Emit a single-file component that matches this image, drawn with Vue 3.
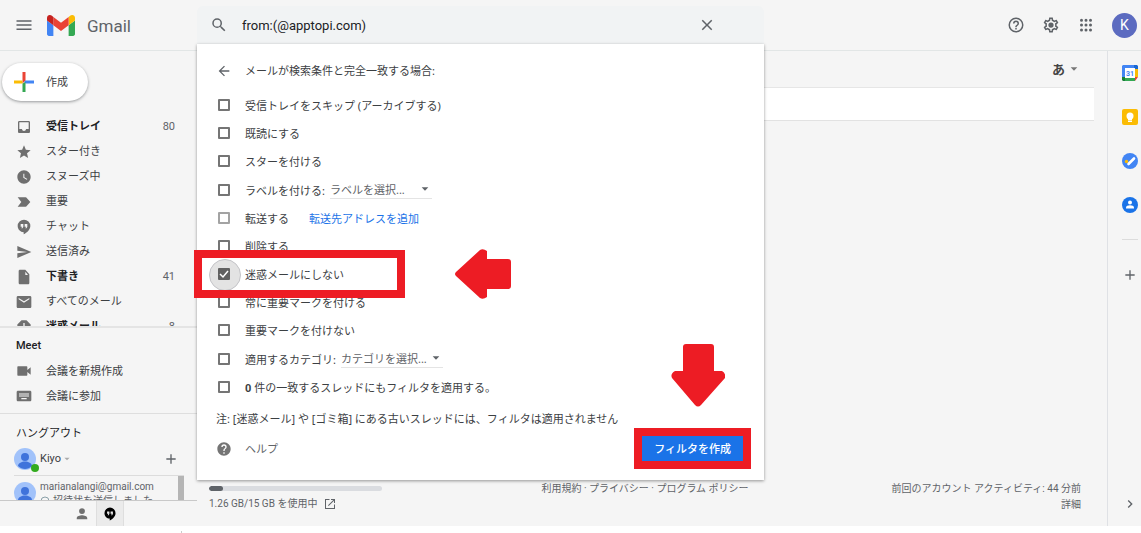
<script setup>
import { ref, h } from 'vue'

const paths = {
  menu: 'M2 18.500h20v-2H2v2zm0-5.500h20v-2H2v2zm0-7.500v2h20v-2H2z',
  search: 'M15.5 14h-.79l-.28-.27A6.47 6.47 0 0 0 16 9.5 6.5 6.5 0 1 0 9.5 16c1.61 0 3.09-.59 4.23-1.57l.27.28v.79l5 4.99L20.49 19l-4.99-5zm-6 0A4.5 4.5 0 1 1 14 9.5 4.5 4.5 0 0 1 9.5 14z',
  close: 'M19 6.41 17.59 5 12 10.59 6.41 5 5 6.41 10.59 12 5 17.59 6.41 19 12 13.41 17.59 19 19 17.59 13.41 12z',
  back: 'M20 11H7.83l5.59-5.59L12 4l-8 8 8 8 1.41-1.41L7.83 13H20v-2z',
  inbox: 'M19 3H5c-1.1 0-2 .9-2 2v14c0 1.1.9 2 2 2h14c1.1 0 2-.9 2-2V5c0-1.1-.9-2-2-2zm0 12h-4c0 1.66-1.35 3-3 3s-3-1.34-3-3H5V5h14v10z',
  star: 'M12 17.27 18.18 21l-1.64-7.03L22 9.24l-7.19-.61L12 2 9.19 8.63 2 9.24l5.46 4.73L5.82 21z',
  clock: 'M12 2C6.5 2 2 6.5 2 12s4.5 10 10 10 10-4.5 10-10S17.5 2 12 2zm4.2 14.2L11 13V7h1.5v5.2l4.5 2.7-.8 1.3z',
  important: 'M2.5 19h12c.67 0 1.27-.33 1.63-.84L21.5 12l-5.37-6.16c-.36-.51-.96-.84-1.63-.84h-12L8 12z',
  hangouts: 'M12 1a9.5 9.5 0 0 0-9.5 9.5c0 5 4 9 9 9.4V23c5-2.4 10-7 10-12.5A9.5 9.5 0 0 0 12 1zM7 7.500h4v4L9.700 14H8l1.200-2.500H7zM13 7.500h4v4L15.700 14H14l1.200-2.500H13z',
  send: 'M2.01 21 23 12 2.01 3 2 10l15 2-15 2z',
  draft: 'M6 1c-1.100 0-2 .9-2 2v18c0 1.100.9 2 2 2h12c1.100 0 2-.9 2-2V8l-6-7H6zm8 8V4l4 5h-4z',
  mail: 'M21 3H3c-1.100 0-2 .9-2 2v14c0 1.100.9 2 2 2h18c1.100 0 2-.9 2-2V5c0-1.100-.9-2-2-2zm-1 5-8 5-8-5V6l8 5 8-5v2z',
  spam: 'M15.730 2H8.270L2 8.270v7.460L8.270 22h7.460L22 15.730V8.270zM12 17.300a1.300 1.300 0 1 1 0-2.600 1.300 1.300 0 0 1 0 2.600zM13 13h-2V6h2z',
  video: 'M17 10.500V6c0-.55-.45-1-1-1H3c-.55 0-1 .45-1 1v12c0 .55.45 1 1 1h13c.55 0 1-.45 1-1v-4.500l5 4v-11z',
  keyboard: 'M21 4H3c-1.100 0-2 .9-2 2v12c0 1.100.9 2 2 2h18c1.100 0 2-.9 2-2V6c0-1.100-.9-2-2-2zM11 8h2v2h-2V8zm0 3h2v2h-2v-2zM8 8h2v2H8V8zm0 3h2v2H8v-2zm-1 2H5v-2h2v2zm0-3H5V8h2v2zm9 7H8v-2h8v2zm0-4h-2v-2h2v2zm0-3h-2V8h2v2zm3 3h-2v-2h2v2zm0-3h-2V8h2v2z',
  help: 'M12 2C6.48 2 2 6.48 2 12s4.48 10 10 10 10-4.48 10-10S17.52 2 12 2zm1 17h-2v-2h2v2zm2.07-7.75-.9.92C13.45 12.9 13 13.500 13 15h-2v-.5c0-1.100.45-2.100 1.170-2.830l1.240-1.260c.37-.36.59-.86.59-1.410a2 2 0 1 0-4 0H8a4 4 0 1 1 8 0c0 .88-.36 1.680-.93 2.250z',
  helpOutline: 'M11 18h2v-2h-2v2zm1-16a10 10 0 1 0 0 20 10 10 0 0 0 0-20zm0 18a8 8 0 1 1 0-16 8 8 0 0 1 0 16zm0-14a4 4 0 0 0-4 4h2a2 2 0 1 1 4 0c0 2-3 1.750-3 5h2c0-2.250 3-2.500 3-5a4 4 0 0 0-4-4z',
  gear: 'M19.43 12.98c.04-.32.07-.64.07-.98 0-.34-.03-.66-.07-.98l2.11-1.65c.19-.15.24-.42.12-.64l-2-3.46c-.09-.16-.26-.25-.44-.25-.06 0-.12.01-.17.03l-2.49 1c-.52-.4-1.08-.73-1.69-.98l-.38-2.65C14.46 2.18 14.25 2 14 2h-4c-.25 0-.46.18-.49.42l-.38 2.65c-.61.25-1.17.59-1.69.98l-2.49-1c-.06-.02-.12-.03-.18-.03-.17 0-.34.09-.43.25l-2 3.46c-.13.22-.07.49.12.64l2.11 1.65c-.04.32-.07.65-.07.98 0 .33.03.66.07.98l-2.11 1.65c-.19.15-.24.42-.12.64l2 3.46c.09.16.26.25.44.25.06 0 .12-.01.17-.03l2.49-1c.52.4 1.08.73 1.69.98l.38 2.65c.03.24.24.42.49.42h4c.25 0 .46-.18.49-.42l.38-2.65c.61-.25 1.17-.59 1.69-.98l2.49 1c.06.02.12.03.18.03.17 0 .34-.09.43-.25l2-3.46c.12-.22.07-.49-.12-.64l-2.11-1.65zm-1.98-1.71c.04.31.05.52.05.73 0 .21-.02.43-.05.73l-.14 1.13.89.7 1.08.84-.7 1.21-1.27-.51-1.04-.42-.9.68c-.43.32-.84.56-1.25.73l-1.06.43-.16 1.13-.2 1.35h-1.4l-.19-1.35-.16-1.13-1.06-.43c-.43-.18-.83-.41-1.23-.71l-.91-.7-1.06.43-1.27.51-.7-1.21 1.08-.84.89-.7-.14-1.13c-.03-.31-.05-.54-.05-.74s.02-.43.05-.73l.14-1.13-.89-.7-1.08-.84.7-1.21 1.27.51 1.04.42.9-.68c.43-.32.84-.56 1.25-.73l1.06-.43.16-1.13.2-1.35h1.39l.19 1.35.16 1.13 1.06.43c.43.18.83.41 1.23.71l.91.7 1.06-.43 1.27-.51.7 1.21-1.07.85-.89.7.14 1.13zM12 8.500a3.500 3.500 0 1 0 0 7 3.500 3.500 0 0 0 0-7z',
  apps: 'M6 3.500a2 2 0 1 0 0 4 2 2 0 0 0 0-4zm6 0a2 2 0 1 0 0 4 2 2 0 0 0 0-4zm6 0a2 2 0 1 0 0 4 2 2 0 0 0 0-4zM6 10a2 2 0 1 0 0 4 2 2 0 0 0 0-4zm6 0a2 2 0 1 0 0 4 2 2 0 0 0 0-4zm6 0a2 2 0 1 0 0 4 2 2 0 0 0 0-4zM6 16.500a2 2 0 1 0 0 4 2 2 0 0 0 0-4zm6 0a2 2 0 1 0 0 4 2 2 0 0 0 0-4zm6 0a2 2 0 1 0 0 4 2 2 0 0 0 0-4z',
  person: 'M12 12a5 5 0 1 0 0-10 5 5 0 0 0 0 10zm0 2c-3.500 0-9 1.600-9 5v2h18v-2c0-3.400-5.500-5-9-5z',
  add: 'M19 13h-6v6h-2v-6H5v-2h6V5h2v6h6v2z',
  chevron: 'M10 6 8.590 7.410 13.170 12l-4.580 4.590L10 18l6-6z',
  caret: 'M4 8l8 8 8-8z',
  open: 'M2 2h9v2H4v16h16v-7h2v9H2V2zm12 0h8v8h-2V5.400L9.400 16 8 14.600 18.600 4H14z',
}

const Icon = (props) =>
  h('svg', { viewBox: '0 0 24 24', 'aria-hidden': 'true', fill: 'currentColor' }, [
    h('path', { d: paths[props.name], 'fill-rule': 'evenodd' }),
  ])
Icon.props = ['name']

const query = ref('from:(@apptopi.com)')

const folders = [
  { icon: 'inbox', label: '受信トレイ', count: 80 },
  { icon: 'star', label: 'スター付き' },
  { icon: 'clock', label: 'スヌーズ中' },
  { icon: 'important', label: '重要' },
  { icon: 'hangouts', label: 'チャット' },
  { icon: 'send', label: '送信済み' },
  { icon: 'draft', label: '下書き', count: 41 },
  { icon: 'mail', label: 'すべてのメール' },
  { icon: 'spam', label: '迷惑メール', count: 8 },
]

const rules = ref([
  { id: 'skip', label: '受信トレイをスキップ (アーカイブする)', on: false },
  { id: 'read', label: '既読にする', on: false },
  { id: 'star', label: 'スターを付ける', on: false },
  { id: 'label', label: 'ラベルを付ける:', on: false, choice: 'ラベルを選択...' },
  { id: 'forward', label: '転送する', on: false, link: '転送先アドレスを追加' },
  { id: 'delete', label: '削除する', on: false },
  { id: 'nospam', label: '迷惑メールにしない', on: true },
  { id: 'always', label: '常に重要マークを付ける', on: false },
  { id: 'never', label: '重要マークを付けない', on: false },
  { id: 'category', label: '適用するカテゴリ:', on: false, choice: 'カテゴリを選択...' },
  { id: 'apply', count: '0', label: ' 件の一致するスレッドにもフィルタを適用する。', on: false },
])
</script>

<template>
  <div class="page">
    <div class="app">
      <header class="top">
        <div class="brand">
          <button class="plain" aria-label="メインメニュー"><Icon name="menu" class="i18" /></button>
          <svg class="logo" viewBox="52 42 88 66" aria-hidden="true">
            <path fill="#4285f4" d="M58 108h14V74L52 59v43c0 3.320 2.690 6 6 6" />
            <path fill="#34a853" d="M120 108h14c3.320 0 6-2.690 6-6V59l-20 15" />
            <path fill="#fbbc04" d="M120 48v26l20-15v-8c0-7.420-8.470-11.650-14.400-7.200" />
            <path fill="#ea4335" d="M72 74V48l24 18 24-18v26L96 92" />
            <path fill="#c5221f" d="M52 51v8l20 15V48l-5.600-4.200c-5.940-4.450-14.400-.22-14.400 7.200" />
          </svg>
          <span class="name">Gmail</span>
        </div>

        <div class="search">
          <button class="plain" aria-label="検索"><Icon name="search" class="i18" /></button>
          <input v-model="query" class="query" type="text" aria-label="メールを検索" />
          <button class="plain" aria-label="検索をクリア"><Icon name="close" class="i18" /></button>

          <form class="filter" @submit.prevent>
            <div class="filter-head">
              <button type="button" class="plain" aria-label="戻る"><Icon name="back" class="i16" /></button>
              <span>メールが検索条件と完全一致する場合:</span>
            </div>
            <ul class="rules">
              <li v-for="r in rules" :key="r.id" class="rule" :class="{ tall: r.choice }">
                <span class="tick" :class="{ focus: r.on }">
                  <input :id="r.id" v-model="r.on" type="checkbox" :class="{ pale: r.link }" />
                  <svg v-if="r.on" class="check" viewBox="0 0 12 12" aria-hidden="true">
                    <path d="M2 6l3 3 5-6" fill="none" stroke="#fff" stroke-width="1.500" />
                  </svg>
                </span>
                <label :for="r.id"><b v-if="r.count">{{ r.count }}</b>{{ r.label }}</label>
                <span v-if="r.choice" class="choice">
                  <select :aria-label="r.label"><option>{{ r.choice }}</option></select>
                  <Icon name="caret" class="i10" />
                </span>
                <a v-if="r.link" href="#" class="forward">{{ r.link }}</a>
                <template v-if="r.id === 'nospam'">
                  <span class="frame row-frame"></span>
                  <svg class="arrow-left" viewBox="0 0 56 50" aria-hidden="true">
                    <path fill="#ed1c24" d="M1 23 25 1q3-2 7 1v8h21q3 0 3 3v24q0 3-3 3H32v8q-4 3-7 1L1 27q-2-2 0-4z" />
                  </svg>
                </template>
              </li>
            </ul>
            <p class="note">注: [迷惑メール] や [ゴミ箱] にある古いスレッドには、フィルタは適用されません</p>
            <div class="filter-foot">
              <a href="#" class="help"><Icon name="help" class="i16" />ヘルプ</a>
              <div class="action">
                <button type="submit" class="create">フィルタを作成</button>
                <span class="frame"></span>
                <svg class="arrow-down" viewBox="0 0 54 63" aria-hidden="true">
                  <path fill="#ed1c24" d="M12 3q0-3 3-3h25q3 0 3 3v24h8q4 2 3 7L30 61q-3 3-6 0L1 34q-2-4 3-7h8z" />
                </svg>
              </div>
            </div>
          </form>
        </div>

        <div class="tools">
          <button class="plain" aria-label="サポート"><Icon name="helpOutline" class="i18" /></button>
          <button class="plain" aria-label="設定"><Icon name="gear" class="i18" /></button>
          <button class="plain" aria-label="Google アプリ"><Icon name="apps" class="i18" /></button>
          <button class="account" aria-label="アカウント">K</button>
        </div>
      </header>

      <div class="body">
        <aside class="side">
          <button class="compose">
            <svg class="plus" viewBox="0 0 20 20" aria-hidden="true">
              <path fill="#ea4335" d="M8.500 0h3v8.500l-3 3z" />
              <path fill="#fbbc04" d="M0 8.500h8.500v3H0z" />
              <path fill="#4285f4" d="M11.500 8.500H20v3h-8.500l-1.500-1.500z" />
              <path fill="#34a853" d="M8.500 11.500l3-1.500v10h-3z" />
            </svg>
            <span>作成</span>
          </button>
          <nav class="folders">
            <a v-for="f in folders" :key="f.label" href="#" class="item" :class="{ unread: f.count }">
              <Icon :name="f.icon" class="i16" />
              <span class="text">{{ f.label }}</span>
              <span v-if="f.count" class="count">{{ f.count }}</span>
            </a>
          </nav>
          <section class="meet">
            <h2>Meet</h2>
            <a href="#" class="item"><Icon name="video" class="i16" /><span class="text">会議を新規作成</span></a>
            <a href="#" class="item"><Icon name="keyboard" class="i16" /><span class="text">会議に参加</span></a>
          </section>
          <section class="hangouts">
            <h2>ハングアウト</h2>
            <div class="me">
              <span class="face online">
                <svg viewBox="0 0 22 22" aria-hidden="true">
                  <circle cx="11" cy="11" r="11" fill="#a1c2fa" />
                  <circle cx="11" cy="9" r="4" fill="#3f73db" />
                  <path fill="#3f73db" d="M4 18c0-3 4-4.500 7-4.500s7 1.500 7 4.500c-4 4-10 4-14 0z" />
                </svg>
              </span>
              <span>Kiyo</span>
              <Icon name="caret" class="i8" />
              <button class="plain new" aria-label="新しい会話"><Icon name="add" class="i16" /></button>
            </div>
            <div class="chats">
              <span class="face">
                <svg viewBox="0 0 22 22" aria-hidden="true">
                  <circle cx="11" cy="11" r="11" fill="#a1c2fa" />
                  <circle cx="11" cy="9" r="4" fill="#3f73db" />
                  <path fill="#3f73db" d="M4 18c0-3 4-4.500 7-4.500s7 1.500 7 4.500c-4 4-10 4-14 0z" />
                </svg>
              </span>
              <div class="chat">
                <div>marianalangi@gmail.com</div>
                <div class="sent">
                  <svg viewBox="0 0 10 10" aria-hidden="true"><circle cx="5" cy="5" r="4" fill="none" stroke="#8aa0a8" /></svg>
                  招待状を送信しました
                </div>
              </div>
              <span class="thumb"></span>
            </div>
          </section>
          <div class="tabs">
            <button class="tab" aria-label="連絡先"><Icon name="person" class="i14" /></button>
            <button class="tab on" aria-label="ハングアウト"><Icon name="hangouts" class="i14" /></button>
          </div>
        </aside>

        <main class="main">
          <div class="bar">
            <button class="plain ime"><span>あ</span><Icon name="caret" class="i10" /></button>
          </div>
          <div class="empty"></div>
          <footer class="foot">
            <div class="storage">
              <div class="meter"><span></span></div>
              <a href="#">1.26 GB/15 GB を使用中<Icon name="open" class="i12" /></a>
            </div>
            <div class="legal">
              <a href="#">利用規約</a> · <a href="#">プライバシー</a> · <a href="#">プログラム ポリシー</a>
            </div>
            <div class="activity">
              前回のアカウント アクティビティ: 44 分前<br /><a href="#">詳細</a>
            </div>
          </footer>
        </main>

        <aside class="rail">
          <button class="plain" aria-label="カレンダー">
            <svg class="i16" viewBox="0 0 16 16">
              <path fill="#4285f4" d="M1 0h11v3H3v10H0V1z" />
              <path fill="#1967d2" d="M12 0h3l1 1v3h-4z" />
              <path fill="#fbbc04" d="M13 4h3v8h-3z" />
              <path fill="#188038" d="M0 12h3v4H1l-1-1z" />
              <path fill="#34a853" d="M3 13h10v3H3z" />
              <path fill="#ea4335" d="M13 12h3l-3 4z" />
              <path fill="#fff" d="M3 3h10v10H3z" />
              <text x="8" y="11" text-anchor="middle" class="day">31</text>
            </svg>
          </button>
          <button class="plain" aria-label="Keep">
            <svg class="i16" viewBox="0 0 16 16">
              <rect width="16" height="16" rx="2" fill="#fbbc04" />
              <circle cx="8" cy="7" r="3.500" fill="#fff" />
              <path fill="#fff" d="M6 9h4v2H6zM6 11.500h4V13H6z" />
            </svg>
          </button>
          <button class="plain" aria-label="ToDo リスト">
            <svg class="i16" viewBox="0 0 16 16">
              <circle cx="8" cy="8" r="8" fill="#4285f4" />
              <circle cx="4.500" cy="8.500" r="1.700" fill="#fbbc04" />
              <path d="M6.500 11l5.500-5.500" stroke="#fff" stroke-width="2.600" stroke-linecap="round" />
            </svg>
          </button>
          <button class="plain" aria-label="連絡先">
            <svg class="i16" viewBox="0 0 16 16">
              <circle cx="8" cy="8" r="8" fill="#1a73e8" />
              <circle cx="8" cy="5.500" r="2" fill="#fff" />
              <path fill="#fff" d="M4 11.500V10.500c0-1.500 2-2.200 4-2.200s4 .7 4 2.200v1z" />
            </svg>
          </button>
          <hr />
          <button class="plain" aria-label="アドオンを取得"><Icon name="add" class="i16" /></button>
          <button class="plain last" aria-label="サイドパネルを非表示"><Icon name="chevron" class="i16" /></button>
        </aside>
      </div>
    </div>
    <div class="below"><span></span></div>
  </div>
</template>

<style>
body {
  margin: 0;
  background: #fff;
}
</style>

<style scoped>
* {
  box-sizing: border-box;
}
.page {
  display: flex;
  flex-direction: column;
  min-height: 100vh;
  font: 11px/16px Roboto, "Noto Sans CJK JP", sans-serif;
  color: #3c4043;
}
.app {
  flex: 1;
  display: flex;
  flex-direction: column;
  background: #f5f5f5;
}
.below {
  height: 7px;
}
.below span {
  display: block;
  width: 1px;
  height: 2px;
  margin: 5px 0 0 181px;
  background: #ccc;
}
a {
  color: inherit;
  text-decoration: none;
}
button,
input,
select {
  font: inherit;
  color: inherit;
}
.plain {
  display: flex;
  align-items: center;
  justify-content: center;
  padding: 0;
  border: 0;
  background: none;
  color: #5f6368;
}
svg {
  flex: none;
  display: block;
}
.i8 { width: 8px; height: 8px; }
.i10 { width: 10px; height: 10px; }
.i12 { width: 12px; height: 12px; }
.i14 { width: 14px; height: 14px; }
.i16 { width: 16px; height: 16px; }
.i18 { width: 18px; height: 18px; }

/* top bar */
.top {
  display: flex;
  height: 51px;
  border-bottom: 1px solid #e2e6e6;
}
.brand {
  flex: none;
  display: flex;
  align-items: center;
  width: 197px;
  padding-left: 15px;
}
.logo {
  width: 28px;
  height: 21px;
  margin: 0 12px 0 14px;
}
.name {
  padding-top: 2px;
  font-size: 17px;
  line-height: 24px;
  color: #5f6368;
}
.search {
  position: relative;
  flex: 0 1 567px;
  display: flex;
  align-items: center;
  height: 38px;
  margin-top: 6px;
  padding: 0 48px 0 13px;
  border-radius: 6px 6px 0 0;
  background: #f1f3f4;
}
.query {
  flex: 1;
  min-width: 0;
  margin-left: 14px;
  padding: 2px 0 0;
  border: 0;
  outline: 0;
  background: none;
  font-size: 13px;
  color: #202124;
}
.tools {
  flex: 1;
  display: flex;
  align-items: center;
  justify-content: flex-end;
  gap: 17px;
  padding-right: 4px;
}
.account {
  width: 25px;
  height: 25px;
  padding: 0;
  border: 0;
  border-radius: 50%;
  background: #5c6bc0;
  color: #fff;
  font-size: 14px;
}

/* filter panel */
.filter {
  position: absolute;
  z-index: 2;
  top: 38px;
  left: 0;
  right: 0;
  padding: 12px 21px 19px 19px;
  background: #fff;
  box-shadow: 0 1px 3px rgba(0, 0, 0, 0.4);
  font-family: "Noto Sans", "Noto Sans CJK JP", sans-serif;
}
.filter-head {
  display: flex;
  align-items: center;
  gap: 13px;
  height: 30px;
}
.rules {
  margin: 5px 0 0;
  padding: 0;
  list-style: none;
}
.rule {
  position: relative;
  display: flex;
  align-items: center;
  height: 28px;
}
.rule.tall {
  height: 29px;
}
.rule label,
.forward {
  padding-top: 2px;
}
.rule b {
  font-family: Roboto, sans-serif;
}
.tick {
  position: relative;
  display: flex;
  width: 29px;
  padding-left: 2px;
}
.tick input {
  appearance: none;
  width: 12px;
  height: 12px;
  margin: 0;
  border: 2px solid #757575;
  border-radius: 1px;
}
.tick input.pale {
  border-color: #a3a3a3;
}
.tick input:checked {
  position: relative;
  background: #616161;
  border-color: #616161;
}
.tick.focus::before {
  content: "";
  position: absolute;
  top: -9px;
  left: -7px;
  width: 30px;
  height: 30px;
  border: 1px solid #c4c4c8;
  border-radius: 50%;
  background: #e3e3e3;
}
.check {
  position: absolute;
  left: 2px;
  width: 12px;
  height: 12px;
  pointer-events: none;
}
.choice {
  position: relative;
  display: flex;
  align-items: center;
  margin-left: 5px;
  border-bottom: 1px solid #e4e4e4;
  color: #5f6368;
}
.choice select {
  appearance: none;
  width: 102px;
  height: 18px;
  padding: 2px 0 0;
  border: 0;
  background: none;
}
.choice svg {
  position: absolute;
  right: 2px;
  pointer-events: none;
}
.forward {
  margin-left: 20px;
  color: #1a73e8;
}
.note {
  margin: 10px 0 0;
}
.filter-foot {
  display: flex;
  align-items: center;
  justify-content: space-between;
  margin-top: 9px;
}
.help {
  display: flex;
  align-items: center;
  gap: 13px;
  color: #5f6368;
}
.help svg {
  color: #757575;
}
.action {
  position: relative;
}
.create {
  display: block;
  height: 25px;
  padding: 0 12px;
  border: 0;
  background: #1a73e8;
  color: #fff;
  font-weight: 500;
}
.frame {
  position: absolute;
  inset: -8px;
  border: 8px solid #ed1c24;
  pointer-events: none;
}
.frame.row-frame {
  z-index: 1;
  inset: -10px auto -10px -22px;
  width: 211px;
}
.arrow-left {
  position: absolute;
  left: 239px;
  width: 56px;
  height: 50px;
}
.arrow-down {
  position: absolute;
  bottom: 54px;
  left: 29px;
  width: 54px;
  height: 63px;
}

/* columns */
.body {
  flex: 1;
  display: flex;
}
.side {
  flex: none;
  display: flex;
  flex-direction: column;
  width: 197px;
}
.compose {
  display: flex;
  align-items: center;
  gap: 12px;
  width: 86px;
  height: 38px;
  margin: 12px 0 12px 2px;
  padding: 0 0 0 12px;
  border: 0;
  border-radius: 19px;
  background: #fff;
  box-shadow: 0 1px 3px rgba(60, 64, 67, 0.5);
}
.compose span {
  padding-top: 2px;
}
.plus {
  width: 20px;
  height: 20px;
}
.folders {
  flex: 1 0 213px;
  height: 213px;
  padding-top: 1px;
  overflow: hidden;
}
.item {
  display: flex;
  align-items: center;
  height: 25px;
  padding: 0 22px 0 16px;
}
.item svg {
  color: #6f6f6f;
}
.text {
  flex: 1;
  margin-left: 14px;
}
.meet .text {
  padding-top: 2px;
}
.unread .text {
  font-weight: 700;
  color: #202124;
}
.count {
  color: #5f6368;
}
.side h2 {
  margin: 0;
  padding-left: 16px;
  font-size: 11px;
  line-height: 16px;
  font-weight: 500;
  color: #202124;
}
.meet {
  height: 87px;
  padding-top: 10px;
  border-top: 2px solid #e4e4e4;
}
.meet h2 {
  margin-bottom: 4px;
}
.hangouts {
  height: 87px;
  padding-top: 12px;
  border-top: 1px solid #dedede;
  overflow: hidden;
}
.side .hangouts h2 {
  font-weight: 400;
}
.me {
  display: flex;
  align-items: center;
  height: 33px;
  padding: 0 18px 0 14px;
}
.me > .i8 {
  margin-left: 2px;
  color: #aaa;
}
.me .new {
  margin-left: auto;
}
.face {
  position: relative;
  flex: none;
  width: 22px;
  height: 22px;
  margin-right: 4px;
}
.online::after {
  content: "";
  position: absolute;
  right: -3px;
  bottom: -2px;
  width: 8px;
  height: 8px;
  border-radius: 50%;
  background: #33ab1f;
}
.chats {
  display: flex;
  margin: 0 13px 0 14px;
  border-top: 1px solid #dcdcdc;
}
.chats .face {
  margin-top: 6px;
}
.chat {
  flex: 1;
  padding-top: 3px;
  font-size: 10px;
  color: #5f6368;
}
.sent {
  display: flex;
  align-items: center;
  gap: 3px;
  line-height: 12px;
}
.sent svg {
  width: 10px;
  height: 10px;
}
.thumb {
  width: 6px;
  background: #b5b5b5;
}
.tabs {
  display: flex;
  height: 26px;
  padding-left: 68px;
  border-top: 1px solid #c9c9c9;
}
.tab {
  display: flex;
  align-items: center;
  justify-content: center;
  width: 28px;
  padding: 0;
  border: 0;
  background: none;
  color: #6f6f6f;
}
.tab.on {
  border: 1px solid #dedede;
  border-width: 0 1px;
  background: #ebebeb;
  color: #000;
}
.main {
  flex: 1;
  display: flex;
  flex-direction: column;
  min-width: 0;
  padding-right: 13px;
}
.bar {
  display: flex;
  align-items: center;
  justify-content: flex-end;
  height: 37px;
  padding-right: 15px;
  border-bottom: 1px solid #e6e6e6;
}
.ime {
  gap: 4px;
  font-size: 13px;
  font-weight: 700;
  color: #444;
}
.ime span {
  padding-top: 2px;
}
.ime svg {
  color: #777;
}
.empty {
  height: 33px;
  border-bottom: 1px solid #e2e2e2;
  background: #fff;
}
.foot {
  display: grid;
  grid-template-columns: 1fr auto 1fr;
  margin-top: auto;
  padding: 0 13px 13px 12px;
  font-size: 10px;
  color: #5f6368;
}
.meter {
  width: 173px;
  height: 5px;
  margin: 6px 0 5px;
  border-radius: 3px;
  background: #dadce0;
  overflow: hidden;
}
.meter span {
  display: block;
  width: 8%;
  height: 100%;
  border-radius: 3px;
  background: #5f6368;
}
.storage a {
  display: flex;
  align-items: center;
  gap: 7px;
}
.legal,
.activity {
  padding-top: 1px;
}
.activity {
  text-align: right;
}
.rail {
  flex: none;
  display: flex;
  flex-direction: column;
  align-items: center;
  width: 34px;
  padding: 14px 0 0 10px;
  border-left: 1px solid #dfe1e5;
}
.rail .plain {
  height: 16px;
  margin-bottom: 28px;
}
.rail hr {
  width: 16px;
  height: 1px;
  margin: -2px 0 27px;
  border: 0;
  background: #dcdcdc;
}
.rail .plain.last {
  margin: auto 0 14px;
}
.day {
  font: 700 7px Roboto, sans-serif;
  fill: #4285f4;
}
</style>
